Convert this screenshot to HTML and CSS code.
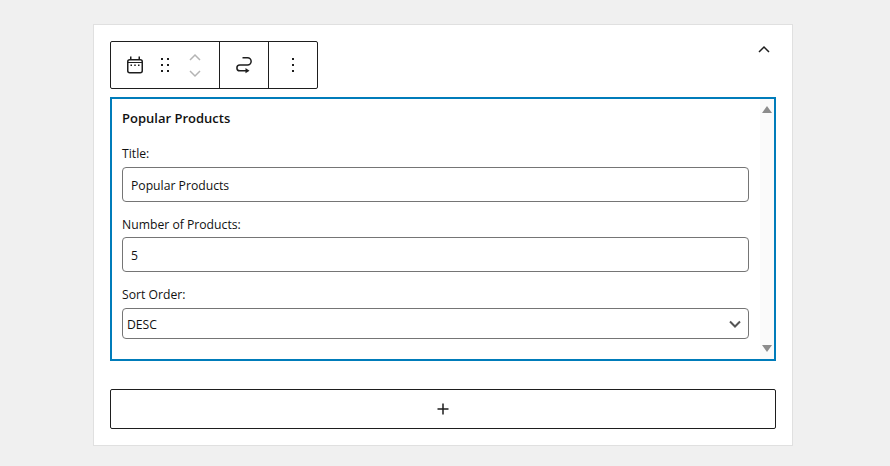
FILE: index.html
```html
<!DOCTYPE html>
<html lang="en">
<head>
<meta charset="utf-8">
<title>Popular Products</title>
<link rel="stylesheet" href="styles.css">
</head>
<body>
<main class="card">
  <div class="top">
    <div class="toolbar">
      <div class="tb-group tb-first">
        <svg class="ico-cal" width="24" height="24" viewBox="0 0 24 24"><rect x="4.750" y="6.750" width="14.500" height="13" rx="2" fill="none" stroke="#1e1e1e" stroke-width="1.500"/><path fill="#1e1e1e" d="M7 3.500h1.500V7H7zM15.500 3.500H17V7h-1.500zM5 9h14v1H5zM7.500 11.500H9V13H7.500zM11.250 11.500h1.500V13h-1.500zM15 11.500h1.500V13H15z"/></svg>
        <svg class="ico-drag" width="10" height="16" viewBox="0 0 10 16"><path fill="#1e1e1e" d="M1 1h2v2H1zM7 1h2v2H7zM1 7h2v2H1zM7 7h2v2H7zM1 13h2v2H1zM7 13h2v2H7z"/></svg>
        <div class="movers">
          <svg width="14" height="8" viewBox="0 0 14 8"><path fill="none" stroke="#b4b4b4" stroke-width="1.500" d="M2 7l5-5 5 5"/></svg>
          <svg width="14" height="8" viewBox="0 0 14 8"><path fill="none" stroke="#b4b4b4" stroke-width="1.500" d="M2 1l5 5 5-5"/></svg>
        </div>
      </div>
      <div class="tb-group tb-mid">
        <svg width="24" height="24" viewBox="0 0 24 24"><path fill="none" stroke="#1e1e1e" stroke-width="1.500" d="M10.500 4.700h5a3.650 3.650 0 0 1 0 7.300H7.800a2.900 2.900 0 0 0 0 5.800H15"/><path fill="#1e1e1e" d="M13.500 15l4 2.800-4 2.400z"/></svg>
      </div>
      <div class="tb-group tb-last">
        <svg width="4" height="16" viewBox="0 0 4 16"><path fill="#1e1e1e" d="M1 1h2v2H1zM1 7h2v2H1zM1 13h2v2H1z"/></svg>
      </div>
    </div>
    <svg class="collapse" width="14" height="8" viewBox="0 0 14 8"><path fill="none" stroke="#1e1e1e" stroke-width="1.500" d="M2 7l5-5 5 5"/></svg>
  </div>
  <section class="block">
    <div class="form">
      <h2 class="heading">Popular Products</h2>
      <label class="field">
        <span class="label">Title:</span>
        <input class="input" type="text" value="Popular Products">
      </label>
      <label class="field">
        <span class="label">Number of Products:</span>
        <input class="input" type="text" value="5">
      </label>
      <label class="field field-select">
        <span class="label">Sort Order:</span>
        <span class="select">DESC
          <svg width="14" height="9" viewBox="0 0 14 9"><path fill="none" stroke="#555" stroke-width="2" d="M2 1.500L7 6.500l5-5"/></svg>
        </span>
      </label>
    </div>
    <div class="scrollbar">
      <span class="arrow arrow-up"></span>
      <span class="arrow arrow-down"></span>
    </div>
  </section>
  <button class="add" type="button" aria-label="Add block">
    <svg width="24" height="24" viewBox="0 0 24 24"><path fill="#1e1e1e" d="M11.250 6.500h1.500v4.750h4.750v1.500h-4.750v4.750h-1.500v-4.750H6.500v-1.500h4.750z"/></svg>
  </button>
</main>
</body>
</html>
```
FILE: styles.css
```css
* { box-sizing: border-box; }
html, body { margin: 0; height: 100%; }
body {
  background: #f0f0f0;
  padding: 24px 97px 20px 93px;
  font-family: "Open Sans", "Noto Sans", sans-serif;
  color: #111;
}
.card {
  width: 700px;
  height: 422px;
  background: #fff;
  border: 1px solid #e0e0e0;
  padding: 16px 16px 16px 16px;
}
.top {
  display: flex;
  justify-content: space-between;
  align-items: flex-start;
  height: 48px;
}
.toolbar {
  display: flex;
  height: 48px;
  width: 208px;
  border: 1px solid #1e1e1e;
  border-radius: 2px;
}
.tb-group {
  display: flex;
  align-items: center;
  justify-content: center;
  height: 100%;
}
.tb-first {
  width: 109px;
  border-right: 1px solid #1e1e1e;
  justify-content: flex-start;
  padding-left: 12px;
}
.tb-mid { width: 49px; border-right: 1px solid #1e1e1e; }
.tb-last { flex: 1; }
.ico-drag { margin-left: 13px; }
.movers {
  display: flex;
  flex-direction: column;
  gap: 9px;
  margin-left: 18px;
}
.movers svg, .collapse { display: block; }
.collapse { margin: 4px 5px 0 0; }
.block {
  display: flex;
  height: 264px;
  margin-top: 8px;
  border: 2px solid #007cba;
  overflow: hidden;
}
.form { flex: 1; min-width: 0; padding: 10px 11px 0 10px; }
.heading {
  margin: 0 0 18px;
  font-size: 13px;
  line-height: 18px;
  font-weight: 600;
}
.field { display: block; margin-bottom: 13px; }
.label {
  display: block;
  font-size: 12.200px;
  line-height: 18px;
  margin-bottom: 4px;
}
.field + .field .label {
  padding-top: 1px;
  margin-bottom: 3px;
  line-height: 18px;
}
.input, .select {
  display: flex;
  align-items: center;
  width: 627px;
  border: 1px solid #757575;
  border-radius: 4px;
  background: #fff;
  font-family: inherit;
  font-size: 12.200px;
  color: #111;
}
.input { height: 35px; padding: 1px 8px 0; }
.select {
  height: 31px;
  margin-top: 4px;
  padding: 1px 6px 0 4px;
  justify-content: space-between;
}
.scrollbar {
  width: 14px;
  background: #fafafa;
  display: flex;
  flex-direction: column;
  justify-content: space-between;
  align-items: center;
  padding: 7px 0;
}
.arrow {
  width: 0;
  height: 0;
  border-left: 5px solid transparent;
  border-right: 5px solid transparent;
}
.arrow-up { border-bottom: 7px solid #8c8c8c; }
.arrow-down { border-top: 7px solid #8c8c8c; }
.add {
  display: flex;
  align-items: center;
  justify-content: center;
  width: 666px;
  height: 40px;
  margin-top: 28px;
  padding: 0;
  background: #fff;
  border: 1px solid #1e1e1e;
  border-radius: 2px;
}
```
